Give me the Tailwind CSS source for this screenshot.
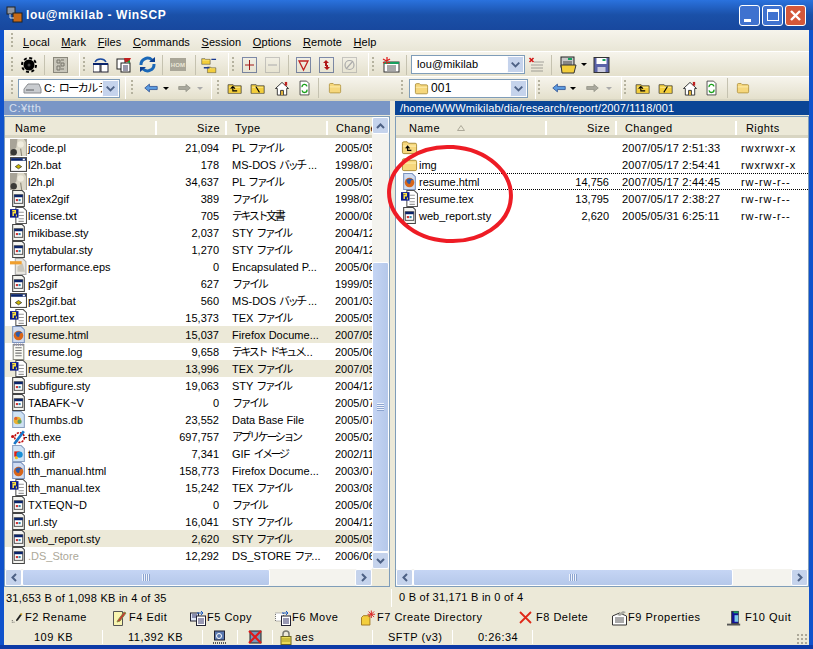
<!DOCTYPE html>
<html lang="en">
<head>
<meta charset="UTF-8">
<title>lou@mikilab - WinSCP</title>
<script src="https://cdn.jsdelivr.net/npm/@tailwindcss/browser@4"></script>
</head>
<body class="m-0 h-[649px] w-[813px] overflow-hidden bg-[#0831d9] text-[11px] leading-none tracking-[.2px] text-black [font-family:'Liberation_Sans','Noto_Sans_CJK_JP',sans-serif]">

<!-- icon sheet -->
<svg class="hidden">
  <symbol id="perl" viewBox="0 0 16 16"><rect width="16" height="16" fill="#a8a498"/><path d="M7 0h6l2 3v13H2l1-5 3-3z" fill="#dcd8c8"/><circle cx="3.500" cy="12.500" r="3" fill="#3a3a36"/><circle cx="10" cy="5" r="3" fill="#f0ecde"/><path d="M10 9l1 7" stroke="#8c8878"/></symbol>
  <symbol id="bat" viewBox="0 0 16 16"><rect x=".5" y="1.500" width="15" height="13" fill="#fff" stroke="#444"/><rect x="1" y="2" width="14" height="2.500" fill="#0a246a"/><rect x="12" y="2.500" width="2" height="1.500" fill="#fff"/><path d="M5 10l3-2 3 2-3 2z" fill="#c8b400" stroke="#333" stroke-width=".7"/></symbol>
  <symbol id="sty" viewBox="0 0 16 16"><path d="M2.500.5h9l2 2v13h-11z" fill="#f4f4f0" stroke="#444"/><rect x="4" y="4.500" width="8" height="8" fill="#fff" stroke="#333" stroke-width=".8"/><rect x="4" y="4.500" width="8" height="2.300" fill="#0a246a"/><rect x="5.500" y="8.500" width="2" height="2" fill="#c33"/><rect x="8" y="8.500" width="2" height="2" fill="#38a"/></symbol>
  <symbol id="tex" viewBox="0 0 16 16"><path d="M5.500.5h7l3 3v12h-10z" fill="#fff" stroke="#555"/><path d="M8 5h5M8 8h5M8 11h5M8 13.500h5" stroke="#999"/><rect x="0" y="2" width="8" height="8" fill="#0a1a8a"/><path d="M2 3.500h3v2H3v3" stroke="#ffe23c" stroke-width="1.400" fill="none"/><path d="M6 7v2" stroke="#e8e040"/></symbol>
  <symbol id="eps" viewBox="0 0 16 16"><path d="M5 .5h7l3 3v12H5z" fill="#e8e6e0" stroke="#aaa"/><path d="M7 8l5-3 2 8H7z" fill="#c9c6bc"/><rect x="0" y="3" width="11" height="3" fill="#f0a030"/></symbol>
  <symbol id="html" viewBox="0 0 16 16"><path d="M2.500.5h8l3 3v12h-11z" fill="#cfdcf2" stroke="#7d94be"/><circle cx="8" cy="9" r="4.500" fill="#d8661a"/><path d="M5 7c2-3 6-2 7 0-2-1-3 0-3 2s-3 2-4-2z" fill="#2d5aa8"/></symbol>
  <symbol id="log" viewBox="0 0 16 16"><path d="M3 1.500h10v14H3z" fill="#fafaf4" stroke="#8a8a80"/><path d="M5 4.500h6M5 7h6M5 9.500h6M5 12h6" stroke="#777"/><path d="M4 .5v2M6 .5v2M8 .5v2M10 .5v2M12 .5v2" stroke="#88a"/></symbol>
  <symbol id="db" viewBox="0 0 16 16"><path d="M2.500.5h8l3 3v12h-11z" fill="#cfe2f4" stroke="#8aa0c0"/><circle cx="7" cy="9" r="3.500" fill="#e8b030"/><circle cx="9" cy="10" r="2" fill="#60a060"/><circle cx="5.500" cy="7" r="1.500" fill="#e06030"/></symbol>
  <symbol id="gif" viewBox="0 0 16 16"><path d="M2.500.5h8l3 3v12h-11z" fill="#cfe2f4" stroke="#8aa0c0"/><rect x="4" y="6" width="5" height="5" fill="#e02010"/><circle cx="9" cy="9" r="3" fill="#1890d8"/><circle cx="6" cy="12" r="1.500" fill="#f0c020"/></symbol>
  <symbol id="exe" viewBox="0 0 16 16"><circle cx="9" cy="9" r="4.500" fill="#fff" stroke="#c01010" stroke-width="1.500" stroke-dasharray="2 1"/><path d="M4 15L13 3" stroke="#1878c8" stroke-width="2.500"/><circle cx="2.500" cy="8" r="1.500" fill="#c01010"/><path d="M14 9h2" stroke="#222"/></symbol>
  <symbol id="folder" viewBox="0 0 18 16"><path d="M1.500 3.500c0-1 .5-1.500 1.500-1.500h3.500l1.500 1.500h7c1 0 1.500.5 1.500 1.500v8c0 1-.5 1.500-1.500 1.500H3c-1 0-1.500-.5-1.500-1.500z" fill="#f6d77c" stroke="#a88a34"/><path d="M2 6.500h14" stroke="#fff2b8"/></symbol>
  <symbol id="upfolder" viewBox="0 0 18 16"><use href="#folder" width="18" height="16"/><path d="M11 11H7V8M5 9l2-2.500L9 9" stroke="#000" stroke-width="1.200" fill="none"/></symbol>
  <symbol id="ybox" viewBox="0 0 22 16"><path d="M1.500 3.500h7l1 1.500h10v10.500h-18z" fill="#f3ce3c" stroke="#333"/><path d="M3 7h15" stroke="#fff2a8"/></symbol>
  <symbol id="left" viewBox="0 0 18 12"><path d="M7 1L1 6l6 5V8h10V4H7z" fill="#5c9be0" stroke="#2a4e90"/></symbol>
  <symbol id="right" viewBox="0 0 18 12"><path d="M11 1l6 5-6 5V8H1V4h10z" fill="#aaa99e" stroke="#8c8b80"/></symbol>
  <symbol id="home" viewBox="0 0 16 16"><path d="M1 8l7-6.500L15 8h-2v7H3V8z" fill="#fff" stroke="#333"/><path d="M6.500 15v-5h3v5" fill="#f0c040" stroke="#333"/><rect x="11" y="1" width="2.500" height="4" fill="#c02020"/></symbol>
  <symbol id="refresh" viewBox="0 0 16 18"><path d="M2.500.5h8l3 3v14h-11z" fill="#fff" stroke="#333"/><path d="M5 8a3 3 0 0 1 6-1M11 11a3 3 0 0 1-6 1" stroke="#18a018" stroke-width="1.600" fill="none"/></symbol>
  <symbol id="mbtn" viewBox="0 0 18 18"><rect x=".5" y=".5" width="17" height="17" rx="1" fill="#c5d3ec" stroke="#fff"/><path d="M5 7l4 4 4-4" stroke="#4d6185" stroke-width="2" fill="none"/></symbol>
</svg>

<div class="flex h-full flex-col rounded-t-[7px] bg-[#0f52cc]">
  <!-- title bar -->
  <div class="flex h-[30px] shrink-0 items-center bg-gradient-to-b from-[#2a72de] via-[#1a50a8] to-[#18489e] pl-[6px] pr-[7px]">
    <svg class="h-[18px] w-[18px]" viewBox="0 0 18 18"><rect x="1" y="1" width="8" height="7" fill="#8e96a4" stroke="#222"/><rect x="7" y="7" width="9" height="9" fill="#c86a18" stroke="#222"/><path d="M4 8v4h4" stroke="#ddd" fill="none"/></svg>
    <span class="ml-[2px] text-[12px] font-bold tracking-[.6px] text-white">lou@mikilab - WinSCP</span>
    <div class="ml-auto flex gap-[2px]">
      <div class="flex h-[21px] w-[21px] items-end justify-start rounded-[3px] border border-white bg-[#3f72cf] pb-[3px] pl-[4px]"><div class="h-[3px] w-[7px] bg-white"></div></div>
      <div class="flex h-[21px] w-[21px] items-center justify-center rounded-[3px] border border-white bg-[#3f72cf]"><div class="h-[12px] w-[12px] border border-t-[3px] border-white"></div></div>
      <div class="flex h-[21px] w-[21px] items-center justify-center rounded-[3px] border border-white bg-[#d4583a]"><svg class="h-[13px] w-[13px]" viewBox="0 0 13 13"><path d="M2 2l9 9M11 2l-9 9" stroke="#fff" stroke-width="2.400"/></svg></div>
    </div>
  </div>

  <div class="mx-[4px] flex flex-1 flex-col bg-[#ece9d8]">
    <!-- menu -->
    <div class="flex h-[22px] items-center border-b border-white bg-gradient-to-b from-[#f6f4ec] to-[#e9e6d6] pl-[7px]">
      <div class="h-[16px] w-[2px] bg-[repeating-linear-gradient(#b5b29f_0_2px,transparent_2px_4px)]"></div>
      <div class="ml-[10px] flex gap-[11.500px] pt-[3px] tracking-[.1px]"><span><u>L</u>ocal</span><span><u>M</u>ark</span><span><u>F</u>iles</span><span><u>C</u>ommands</span><span><u>S</u>ession</span><span><u>O</u>ptions</span><span><u>R</u>emote</span><span><u>H</u>elp</span></div>
    </div>
    <!-- main toolbar -->
    <div class="flex h-[25px] items-center border-b border-white bg-gradient-to-b from-[#f6f4ec] to-[#e4e0cc] pl-[7px] pt-[1px]">
      <div class="h-[16px] w-[2px] bg-[repeating-linear-gradient(#b5b29f_0_2px,transparent_2px_4px)]"></div>
      <svg class="ml-[8px] h-[16px] w-[16px]" viewBox="0 0 16 16"><circle cx="8" cy="8" r="5.500" fill="#000"/><circle cx="8" cy="8" r="7" fill="none" stroke="#000" stroke-width="2" stroke-dasharray="3 2.500"/><circle cx="8" cy="8" r="1.500" fill="#444"/></svg>
      <div class="ml-[7px] h-[20px] w-px bg-[#c5c2b0]"></div>
      <svg class="ml-[8px] h-[16px] w-[15px]" viewBox="0 0 15 16"><rect x=".5" y=".5" width="14" height="15" fill="#c8c6ba" stroke="#8a887c"/><path d="M4 3h3v3H4zM8 3h3M8 6h3v3H8zM4 9h3v4H4zM8 12h3" stroke="#77756a" fill="none"/></svg>
      <div class="ml-[11px] h-[24px] w-px bg-white"></div>
      <div class="ml-[3px] h-[16px] w-[2px] bg-[repeating-linear-gradient(#b5b29f_0_2px,transparent_2px_4px)]"></div>
      <svg class="ml-[8px] h-[16px] w-[16px]" viewBox="0 0 16 16"><rect x="0" y="7" width="7" height="8" fill="#fff" stroke="#223"/><rect x="8" y="7" width="7" height="8" fill="#fff" stroke="#223"/><path d="M0 7h15" stroke="#0a246a" stroke-width="2"/><path d="M2 5a6 5 0 0 1 11 0" stroke="#1a4aa0" stroke-width="1.500" fill="none"/></svg>
      <svg class="ml-[7px] h-[16px] w-[16px]" viewBox="0 0 16 16"><rect x="1" y="2" width="8" height="10" fill="#fff" stroke="#222"/><rect x="5" y="6" width="9" height="9" fill="#fff" stroke="#222"/><path d="M7 9h5M7 11h5M7 13h5" stroke="#335"/><path d="M8 1h7l-2 4H9z" fill="#c02020"/><path d="M11 5l3-2v3z" fill="#18a038"/></svg>
      <svg class="ml-[7px] h-[17px] w-[17px]" viewBox="0 0 17 17"><path d="M2 9a6.500 6.500 0 0 1 11-5" stroke="#1a68b8" stroke-width="3" fill="none"/><path d="M15 8a6.500 6.500 0 0 1-11 5" stroke="#1a68b8" stroke-width="3" fill="none"/><path d="M10 6h6V1zM7 11H1v5z" fill="#0d3f90"/></svg>
      <div class="ml-[6px] h-[20px] w-px bg-[#c5c2b0]"></div>
      <div class="ml-[7px] flex h-[13px] w-[16px] items-center justify-center bg-[#a9a698] text-[6px] font-bold text-[#e9e6d6]">HOM</div>
      <div class="ml-[9px] h-[20px] w-px bg-[#c5c2b0]"></div>
      <svg class="ml-[5px] h-[18px] w-[16px]" viewBox="0 0 17 18"><use href="#ybox" x="0" y="0" width="11" height="9"/><use href="#ybox" x="6" y="9" width="11" height="9"/><path d="M11 3h5M3 12H9" stroke="#1a3a90" stroke-width="1.500"/></svg>
      <div class="ml-[11px] h-[24px] w-px bg-white"></div>
      <div class="ml-[3px] h-[16px] w-[2px] bg-[repeating-linear-gradient(#b5b29f_0_2px,transparent_2px_4px)]"></div>
      <svg class="ml-[8px] h-[16px] w-[15px]" viewBox="0 0 15 16"><rect x=".5" y=".5" width="14" height="15" fill="none" stroke="#0a246a" stroke-dasharray="1 1"/><path d="M7.500 3v10M3 8h9" stroke="#a01818"/></svg>
      <svg class="ml-[8px] h-[16px] w-[15px]" viewBox="0 0 15 16"><rect x=".5" y=".5" width="14" height="15" fill="none" stroke="#999" stroke-dasharray="1 1"/><path d="M3 8h9" stroke="#aaa"/></svg>
      <div class="ml-[8px] h-[20px] w-px bg-[#c5c2b0]"></div>
      <svg class="ml-[7px] h-[16px] w-[15px]" viewBox="0 0 15 16"><rect x=".5" y=".5" width="14" height="15" fill="none" stroke="#0a246a" stroke-dasharray="1 1"/><path d="M3 4h9l-4.500 9z" fill="none" stroke="#c02020" stroke-width="1.300"/></svg>
      <svg class="ml-[8px] h-[16px] w-[15px]" viewBox="0 0 15 16"><rect x=".5" y=".5" width="14" height="15" fill="none" stroke="#0a246a" stroke-dasharray="1 1"/><path d="M7 3l3 3H8v3H6V6H4zM8 13l-3-3h2V8h2v2h2z" fill="#b01818"/></svg>
      <svg class="ml-[8px] h-[16px] w-[15px]" viewBox="0 0 15 16"><rect x=".5" y=".5" width="14" height="15" fill="none" stroke="#999" stroke-dasharray="1 1"/><circle cx="7.500" cy="8" r="4.500" fill="none" stroke="#aaa" stroke-width="1.200"/><path d="M4 12l7-8" stroke="#aaa" stroke-width="1.200"/></svg>
      <div class="ml-[11px] h-[24px] w-px bg-white"></div>
      <div class="ml-[3px] h-[16px] w-[2px] bg-[repeating-linear-gradient(#b5b29f_0_2px,transparent_2px_4px)]"></div>
      <svg class="ml-[8px] h-[16px] w-[18px]" viewBox="0 0 18 16"><rect x="2" y="5" width="15" height="10" fill="#fff" stroke="#333"/><rect x="2" y="5" width="15" height="2" fill="#18a060"/><path d="M5 9h9M5 11h9M5 13h9" stroke="#555"/><path d="M5 0v7M1 2l7 4M8 2L1 6" stroke="#e02020" stroke-width="1.300"/></svg>
      <div class="ml-[6px] h-[20px] w-px bg-[#c5c2b0]"></div>
      <!-- session box -->
      <div class="relative ml-[4px] flex h-[19px] w-[114px] items-center border border-[#7f9db9] bg-white pl-[5px] tracking-[.1px]">lou@mikilab
        <svg class="absolute right-0 top-0 h-[17px] w-[17px]"><use href="#mbtn"/></svg>
      </div>
      <svg class="ml-[3px] h-[16px] w-[17px]" viewBox="0 0 16 16"><path d="M1 1l4 4M5 1L1 5" stroke="#d01010" stroke-width="1.500"/><path d="M6 5h9M3 8h12M3 11h12M3 14h12" stroke="#555" stroke-dasharray="1 1"/></svg>
      <div class="ml-[6px] h-[20px] w-px bg-[#c5c2b0]"></div>
      <svg class="ml-[8px] h-[18px] w-[17px]" viewBox="0 0 17 18"><rect x="1" y="1" width="13" height="10" fill="#c8c8c8" stroke="#222"/><rect x="8" y="2" width="4" height="2" fill="#18a060"/><path d="M3 6h9M3 8h9" stroke="#444"/><path d="M1 9h15l-2 8H2z" fill="#f3ce3c" stroke="#333"/></svg>
      <div class="ml-[4px] h-0 w-0 border-x-[3px] border-t-[3px] border-x-transparent border-t-black"></div>
      <svg class="ml-[6px] h-[16px] w-[17px]" viewBox="0 0 16 16"><rect x=".5" y=".5" width="15" height="15" fill="#5a62a8" stroke="#333"/><rect x="3" y="1" width="10" height="6" fill="#fff"/><rect x="9" y="2" width="3" height="2" fill="#18a060"/><rect x="4" y="10" width="8" height="5" fill="#cbcce0"/></svg>
    </div>

    <!-- path toolbars -->
    <div class="flex h-[24px] border-b-2 border-[#d8d5c2] bg-gradient-to-b from-[#f6f4ec] to-[#e4e0cc]">
      <div class="flex w-[386px] items-center pl-[7px]">
        <div class="h-[16px] w-[2px] bg-[repeating-linear-gradient(#b5b29f_0_2px,transparent_2px_4px)]"></div>
        <div class="relative ml-[5px] flex h-[19px] w-[102px] shrink-0 items-center overflow-hidden border border-[#7f9db9] bg-white pl-[4px]">
          <svg class="h-[12px] w-[19px] shrink-0" viewBox="0 0 19 12"><path d="M1 7l4-5h11l2 5v4H1z" fill="#c9ccd0" stroke="#8a8c90"/><path d="M3 8h8" stroke="#5a5c60"/></svg>
          <span class="ml-[2px] whitespace-nowrap">C: <span class="tracking-[-1.500px]">ローカル ディスク</span></span>
          <svg class="absolute right-0 top-0 h-[17px] w-[17px]"><use href="#mbtn"/></svg>
        </div>
        <div class="ml-[5px] h-[22px] w-px bg-white"></div>
        <div class="ml-[5px] h-[16px] w-[2px] bg-[repeating-linear-gradient(#b5b29f_0_2px,transparent_2px_4px)]"></div>
        <svg class="ml-[11px] h-[12px] w-[14px]"><use href="#left"/></svg>
        <div class="ml-[5px] h-0 w-0 border-x-[3px] border-t-[3px] border-x-transparent border-t-black"></div>
        <svg class="ml-[9px] h-[12px] w-[13px]"><use href="#right"/></svg>
        <div class="ml-[6px] h-0 w-0 border-x-[3px] border-t-[3px] border-x-transparent border-t-[#aaa]"></div>
        <div class="ml-[8px] h-[22px] w-px bg-white"></div>
        <div class="ml-[5px] h-[16px] w-[2px] bg-[repeating-linear-gradient(#b5b29f_0_2px,transparent_2px_4px)]"></div>
        <svg class="ml-[8px] h-[12px] w-[16px]" viewBox="0 0 22 16"><use href="#ybox" width="22" height="16"/><path d="M14 12H8V7M5 9l3-3 3 3" stroke="#000" stroke-width="1.500" fill="none"/></svg>
        <svg class="ml-[7px] h-[12px] w-[16px]" viewBox="0 0 22 16"><use href="#ybox" width="22" height="16"/><path d="M8 6l5 8" stroke="#000" stroke-width="1.500"/></svg>
        <svg class="ml-[8px] h-[15px] w-[16px]"><use href="#home"/></svg>
        <svg class="ml-[8px] h-[16px] w-[13px]"><use href="#refresh"/></svg>
        <div class="ml-[7px] h-[20px] w-px bg-[#c5c2b0]"></div>
        <svg class="ml-[8px] h-[12px] w-[16px]"><use href="#folder"/></svg>
      </div>
      <div class="flex flex-1 items-center pl-[11px]">
        <div class="h-[16px] w-[2px] bg-[repeating-linear-gradient(#b5b29f_0_2px,transparent_2px_4px)]"></div>
        <div class="relative ml-[6px] flex h-[19px] w-[119px] shrink-0 items-center border border-[#7f9db9] bg-white pl-[4px]">
          <svg class="h-[13px] w-[15px]"><use href="#folder"/></svg>
          <span class="ml-[2px] text-[12px]">001</span>
          <svg class="absolute right-0 top-0 h-[17px] w-[17px]"><use href="#mbtn"/></svg>
        </div>
        <div class="ml-[7px] h-[22px] w-px bg-white"></div>
        <div class="ml-[2px] h-[16px] w-[2px] bg-[repeating-linear-gradient(#b5b29f_0_2px,transparent_2px_4px)]"></div>
        <svg class="ml-[12px] h-[12px] w-[14px]"><use href="#left"/></svg>
        <div class="ml-[4px] h-0 w-0 border-x-[3px] border-t-[3px] border-x-transparent border-t-black"></div>
        <svg class="ml-[10px] h-[12px] w-[13px]"><use href="#right"/></svg>
        <div class="ml-[7px] h-0 w-0 border-x-[3px] border-t-[3px] border-x-transparent border-t-[#aaa]"></div>
        <div class="ml-[9px] h-[22px] w-px bg-white"></div>
        <div class="ml-[2px] h-[16px] w-[2px] bg-[repeating-linear-gradient(#b5b29f_0_2px,transparent_2px_4px)]"></div>
        <svg class="ml-[9px] h-[12px] w-[16px]" viewBox="0 0 22 16"><use href="#ybox" width="22" height="16"/><path d="M14 12H8V7M5 9l3-3 3 3" stroke="#000" stroke-width="1.500" fill="none"/></svg>
        <svg class="ml-[7px] h-[12px] w-[16px]" viewBox="0 0 22 16"><use href="#ybox" width="22" height="16"/><path d="M8 14l5-8" stroke="#000" stroke-width="1.500"/></svg>
        <svg class="ml-[8px] h-[15px] w-[16px]"><use href="#home"/></svg>
        <svg class="ml-[7px] h-[16px] w-[13px]"><use href="#refresh"/></svg>
        <div class="ml-[9px] h-[20px] w-px bg-[#c5c2b0]"></div>
        <svg class="ml-[7px] h-[12px] w-[16px]"><use href="#folder"/></svg>
      </div>
    </div>

    <!-- panels -->
    <div class="flex h-[486px]">
      <!-- local -->
      <div class="flex w-[386px] flex-col">
        <div class="flex h-[14px] items-center bg-[#7a96c6] pl-[5px] tracking-[.5px] text-[#d8e0ee]">C:¥tth</div>
        <div class="relative mt-[1px] flex-1 overflow-hidden border border-[#7f9db9] bg-white">
          <div class="flex h-[21px] items-center border-b-[3px] border-[#d8d5c2] bg-[#ece9d8] pt-[4px] tracking-[.4px]">
            <div class="w-[150px] pl-[10px]">Name</div>
            <div class="w-[70px] border-l-2 border-white pr-[5px] text-right leading-[14px]">Size</div>
            <div class="w-[101px] border-l-2 border-white pl-[8px] leading-[14px]">Type</div>
            <div class="w-[47px] overflow-hidden whitespace-nowrap border-l-2 border-white pl-[8px] leading-[14px]">Changed</div>
          </div>
          <div id="lrows" class="pt-[1px]"></div>
          <!-- vertical scrollbar -->
          <div class="absolute bottom-[17px] right-0 top-0 flex w-[17px] flex-col bg-[#f4f3ee]">
            <div class="flex h-[17px] w-[17px] shrink-0 items-center justify-center rounded-[2px] border border-white bg-[#c5d3ec]"><svg class="h-[8px] w-[9px]" viewBox="0 0 9 8"><path d="M1 6l3.500-3.500L8 6" stroke="#4d6185" stroke-width="2" fill="none"/></svg></div>
            <div class="h-[128px]"></div>
            <div class="flex flex-1 items-center justify-center rounded-[2px] border border-white bg-gradient-to-r from-[#c5d5f4] to-[#b5c8ea]"><div class="h-[8px] w-[7px] bg-[repeating-linear-gradient(#eef3fc_0_1px,#8ca4d0_1px_2px)]"></div></div>
            <div class="flex h-[17px] w-[17px] shrink-0 items-center justify-center rounded-[2px] border border-white bg-[#c5d3ec]"><svg class="h-[8px] w-[9px]" viewBox="0 0 9 8"><path d="M1 2l3.500 3.500L8 2" stroke="#4d6185" stroke-width="2" fill="none"/></svg></div>
          </div>
          <!-- horizontal scrollbar -->
          <div class="absolute bottom-0 left-0 right-[17px] flex h-[17px] bg-[#f4f3ee]">
            <div class="flex h-[17px] w-[17px] shrink-0 items-center justify-center rounded-[2px] border border-white bg-[#c5d3ec]"><svg class="h-[9px] w-[8px]" viewBox="0 0 8 9"><path d="M6 1L2.500 4.500 6 8" stroke="#4d6185" stroke-width="2" fill="none"/></svg></div>
            <div class="flex w-[248px] items-center justify-center rounded-[2px] border border-white bg-gradient-to-b from-[#c5d5f4] to-[#b5c8ea]"><div class="h-[7px] w-[8px] bg-[repeating-linear-gradient(90deg,#eef3fc_0_1px,#8ca4d0_1px_2px)]"></div></div>
            <div class="flex-1"></div>
            <div class="flex h-[17px] w-[17px] shrink-0 items-center justify-center rounded-[2px] border border-white bg-[#c5d3ec]"><svg class="h-[9px] w-[8px]" viewBox="0 0 8 9"><path d="M2 1l3.500 3.500L2 8" stroke="#4d6185" stroke-width="2" fill="none"/></svg></div>
          </div>
          <div class="absolute bottom-0 right-0 h-[17px] w-[17px] bg-[#ece9d8]"></div>
        </div>
      </div>
      <div class="w-[5px] shrink-0"></div>
      <!-- remote -->
      <div class="flex flex-1 flex-col">
        <div class="flex h-[14px] items-center bg-[#0a4596] pl-[5px] tracking-[.1px] text-white">/home/WWWmikilab/dia/research/report/2007/1118/001</div>
        <div class="relative mt-[1px] flex-1 overflow-hidden border border-[#7f9db9] bg-white">
          <div class="flex h-[21px] items-center border-b-[3px] border-[#d8d5c2] bg-[#ece9d8] pt-[4px] tracking-[.4px]">
            <div class="flex w-[149px] items-center pl-[13px]">Name<svg class="ml-[17px] h-[6px] w-[8px]" viewBox="0 0 8 6"><path d="M4 .5L.5 5.500h7z" fill="none" stroke="#aca899"/></svg></div>
            <div class="w-[70px] border-l-2 border-white pr-[5px] text-right leading-[14px]">Size</div>
            <div class="w-[120px] border-l-2 border-white pl-[8px] leading-[14px]">Changed</div>
            <div class="flex-1 border-l-2 border-white pl-[9px] leading-[14px]">Rights</div>
          </div>
          <div id="rrows" class="pt-[1px]"></div>
          <!-- horizontal scrollbar -->
          <div class="absolute bottom-0 left-0 right-0 flex h-[17px] bg-[#f4f3ee]">
            <div class="flex h-[17px] w-[17px] shrink-0 items-center justify-center rounded-[2px] border border-white bg-[#c5d3ec]"><svg class="h-[9px] w-[8px]" viewBox="0 0 8 9"><path d="M6 1L2.500 4.500 6 8" stroke="#4d6185" stroke-width="2" fill="none"/></svg></div>
            <div class="flex w-[320px] items-center justify-center rounded-[2px] border border-white bg-gradient-to-b from-[#c5d5f4] to-[#b5c8ea]"><div class="h-[7px] w-[8px] bg-[repeating-linear-gradient(90deg,#eef3fc_0_1px,#8ca4d0_1px_2px)]"></div></div>
            <div class="flex-1"></div>
            <div class="flex h-[17px] w-[17px] shrink-0 items-center justify-center rounded-[2px] border border-white bg-[#c5d3ec]"><svg class="h-[9px] w-[8px]" viewBox="0 0 8 9"><path d="M2 1l3.500 3.500L2 8" stroke="#4d6185" stroke-width="2" fill="none"/></svg></div>
          </div>
        </div>
      </div>
    </div>

    <!-- selection status -->
    <div class="flex h-[21px] items-center tracking-[.25px]">
      <div class="w-[388px] border-r border-white pl-[2px] leading-[18px]">31,653 B of 1,098 KB in 4 of 35</div>
      <div class="pl-[7px]">0 B of 31,171 B in 0 of 4</div>
    </div>
    <!-- function keys -->
    <div class="flex h-[19px] items-center whitespace-nowrap pl-[7px] tracking-[.5px]">
      <div class="flex w-[101px] items-center gap-[2px]"><svg class="h-[13px] w-[12px]" viewBox="0 0 14 13"><path d="M6 9l5-7 2 1-5 7-2 1z" fill="#222"/><path d="M11 2l2 1" stroke="#c8a020" stroke-width="2"/><path d="M1 12h1M3 12h1M1 10h1" stroke="#444"/></svg>F2 Rename</div>
      <div class="flex w-[78px] items-center gap-[2px]"><svg class="h-[16px] w-[15px]" viewBox="0 0 15 16"><path d="M1.500 1.500h9v14h-9z" fill="#f8f4b0" stroke="#555"/><path d="M6 10l6-8 2 1-6 8-3 1z" fill="#c83030" stroke="#884"/></svg>F4 Edit</div>
      <div class="flex w-[85px] items-center gap-[1px]"><svg class="h-[16px] w-[16px]" viewBox="0 0 16 16"><rect x=".5" y="3" width="8" height="8" fill="#dfe8f6" stroke="#223"/><rect x="6.500" y="6" width="9" height="9.500" fill="#fff" stroke="#223"/><path d="M8 9h6M8 11h6M8 13h6M2 5h5M2 7h4" stroke="#336"/><path d="M7 3h6l-2-2M13 3l-2 2" stroke="#1a58c0" fill="none"/></svg>F5 Copy</div>
      <div class="flex w-[86px] items-center gap-[1px]"><svg class="h-[16px] w-[16px]" viewBox="0 0 16 16"><rect x=".5" y="3" width="8" height="8" fill="#fff" stroke="#777" stroke-dasharray="1 1"/><rect x="6.500" y="6" width="9" height="9.500" fill="#fff" stroke="#223"/><path d="M8 9h6M8 11h6M8 13h6" stroke="#336"/><path d="M7 3h6l-2-2M13 3l-2 2" stroke="#1a58c0" fill="none"/></svg>F6 Move</div>
      <div class="flex w-[158px] items-center gap-[1px]"><svg class="h-[16px] w-[15px]" viewBox="0 0 16 16"><path d="M.5 7.500l2-2h7v10h-9z" fill="#f3ce3c" stroke="#a07820"/><path d="M11 0v8M7 4h8M8 1l6 6M14 1L8 7" stroke="#d82020"/></svg>F7 Create Directory</div>
      <div class="flex w-[92px] items-center gap-[4px]"><svg class="h-[13px] w-[13px]" viewBox="0 0 13 13"><path d="M1 1l11 11M12 1L1 12" stroke="#e02818" stroke-width="1.800"/></svg>F8 Delete</div>
      <div class="flex w-[116px] items-center"><svg class="h-[16px] w-[17px]" viewBox="0 0 17 16"><path d="M1.500 6l7-3 7 3v9h-14z" fill="#fff" stroke="#333"/><path d="M4 8h9M4 10h9M4 12h9" stroke="#555"/><path d="M6 5l6-4 3 1-6 4z" fill="#a8a8a0"/></svg>F9 Properties</div>
      <div class="flex items-center gap-[2px]"><svg class="h-[16px] w-[16px]" viewBox="0 0 17 16"><rect x="5" y="1" width="7" height="13" fill="#10109a" stroke="#333"/><rect x="7" y="1" width="5" height="2" fill="#18a060"/><path d="M8 5h4v7H8z" fill="#7cc8e8"/><path d="M0 15h14" stroke="#555" stroke-width="2"/></svg>F10 Quit</div>
    </div>
    <!-- bottom status -->
    <div class="flex h-[18px] items-center whitespace-nowrap pt-[2px] tracking-[.5px]">
      <div class="w-[99px] border-r border-white pl-[30px] leading-[14px]">109 KB</div>
      <div class="w-[100px] border-r border-white pl-[25px] leading-[14px]">11,392 KB</div>
      <div class="flex h-[14px] w-[35px] items-center justify-center border-r border-white"><svg class="h-[14px] w-[14px]" viewBox="0 0 14 14"><rect x="1.500" y="1" width="10" height="9" fill="#5a78b0" stroke="#223"/><circle cx="6" cy="6" r="2.500" fill="none" stroke="#fff"/><path d="M0 13h14" stroke="#555" stroke-dasharray="1 1" stroke-width="2"/></svg></div>
      <div class="flex h-[14px] w-[35px] items-center justify-center border-r border-white"><svg class="h-[14px] w-[15px]" viewBox="0 0 15 14"><rect x="2" y="1" width="11" height="12" fill="#7898b8" stroke="#222"/><path d="M1 1l12 12M13 1L1 13" stroke="#e01818" stroke-width="2"/></svg></div>
      <div class="flex h-[14px] w-[100px] items-center border-r border-white pl-[7px]"><svg class="h-[15px] w-[12px]" viewBox="0 0 12 15"><path d="M3 7V4a3 3 0 0 1 6 0v3" stroke="#7a7a70" stroke-width="1.500" fill="none"/><rect x="1" y="6.500" width="10" height="8" fill="#eadc58" stroke="#6a6420"/><path d="M2 9h8M2 11h8" stroke="#a89c20"/></svg><span class="ml-[3px]">aes</span></div>
      <div class="w-[80px] border-r border-white pl-[15px] leading-[14px]">SFTP (v3)</div>
      <div class="w-[80px] border-r border-white pl-[25px] leading-[14px]">0:26:34</div>
      <div class="ml-auto mr-[1px] h-[12px] w-[12px] self-end bg-[radial-gradient(#aca899_1px,transparent_1.5px)] bg-[length:4px_4px]"></div>
    </div>
  </div>
  <div class="h-[4px] shrink-0 bg-[#0c3aa6]"></div>
</div>

<script>
  const localFiles = [
    ['perl','jcode.pl','21,094','PL ファイル','2005/05',0],
    ['bat','l2h.bat','178','MS-DOS バッチ ...','1998/07',0],
    ['perl','l2h.pl','34,637','PL ファイル','2005/05',0],
    ['sty','latex2gif','389','ファイル','1998/02',0],
    ['tex','license.txt','705','テキスト文書','2000/08',0],
    ['sty','mikibase.sty','2,037','STY ファイル','2004/12',0],
    ['sty','mytabular.sty','1,270','STY ファイル','2004/12',0],
    ['eps','performance.eps','0','Encapsulated P...','2005/06',0],
    ['sty','ps2gif','627','ファイル','1999/05',0],
    ['bat','ps2gif.bat','560','MS-DOS バッチ ...','2001/03',0],
    ['tex','report.tex','15,373','TEX ファイル','2005/05',0],
    ['html','resume.html','15,037','Firefox Docume...','2007/05',1],
    ['log','resume.log','9,658','テキスト ドキュメ...','2005/06',0],
    ['tex','resume.tex','13,996','TEX ファイル','2007/05',1],
    ['sty','subfigure.sty','19,063','STY ファイル','2004/12',0],
    ['sty','TABAFK~V','0','ファイル','2005/07',0],
    ['db','Thumbs.db','23,552','Data Base File','2005/07',0],
    ['exe','tth.exe','697,757','アプリケーション','2005/02',0],
    ['gif','tth.gif','7,341','GIF イメージ','2002/11',0],
    ['html','tth_manual.html','158,773','Firefox Docume...','2003/07',0],
    ['tex','tth_manual.tex','15,242','TEX ファイル','2003/08',0],
    ['sty','TXTEQN~D','0','ファイル','2005/06',0],
    ['sty','url.sty','16,041','STY ファイル','2004/12',0],
    ['sty','web_report.sty','2,620','STY ファイル','2005/05',1],
    ['sty','.DS_Store','12,292','DS_STORE ファ...','2006/06',2],
  ];
  const remoteFiles = [
    ['upfolder','','','2007/05/17 2:51:33','rwxrwxr-x',0],
    ['folder','img','','2007/05/17 2:54:41','rwxrwxr-x',0],
    ['html','resume.html','14,756','2007/05/17 2:44:45','rw-rw-r--',1],
    ['tex','resume.tex','13,795','2007/05/17 2:38:27','rw-rw-r--',0],
    ['sty','web_report.sty','2,620','2005/05/31 6:25:11','rw-rw-r--',0],
  ];

  // the original font sets kana narrower than full width
  const narrowKana = s => s.replace(/[\u3000-\u9fff]+/g, m => `<span class="tracking-[-2.400px]">${m}</span>`);

  document.getElementById('lrows').innerHTML = localFiles.map(([icon, name, size, type, date, state]) => `
    <div class="flex h-[17px] items-center whitespace-nowrap tracking-normal ${state === 1 ? 'bg-[#ece9d8]' : ''}">
      <svg class="ml-[5px] h-[17px] w-[17px] shrink-0"><use href="#${icon}"/></svg>
      <div class="ml-[1px] w-[127px] pt-[2px] ${state === 2 ? 'text-[#aca899]' : ''}">${name}</div>
      <div class="w-[64px] pt-[2px] text-right">${size}</div>
      <div class="ml-[13px] w-[103px] pt-[2px]">${narrowKana(type)}</div>
      <div class="w-[40px] pt-[2px]">${date}</div>
    </div>`).join('');

  document.getElementById('rrows').innerHTML = remoteFiles.map(([icon, name, size, date, rights, focus]) => `
    <div class="flex h-[17px] items-center whitespace-nowrap tracking-normal">
      <svg class="ml-[5px] h-[17px] w-[17px] shrink-0"><use href="#${icon}"/></svg>
      <div class="flex h-full grow items-center ${focus ? 'border-y border-dotted border-black' : ''}">
        <div class="ml-[1px] w-[120px] pt-[2px]">${name}</div>
        <div class="w-[70px] pt-[2px] text-right">${size}</div>
        <div class="ml-[13px] w-[119px] pt-[2px] tracking-[.2px]">${date}</div>
        <div class="pt-[2px] tracking-[.9px]">${rights}</div>
      </div>
    </div>`).join('');
</script>

<!-- hand-drawn circle over the remote list -->
<svg class="absolute left-[385px] top-[141px] h-[106px] w-[130px]" viewBox="0 0 130 106"><ellipse cx="65" cy="53" rx="61" ry="47" fill="none" stroke="#ee1c25" stroke-width="4" transform="rotate(4 65 53)"/></svg>
</body>
</html>
